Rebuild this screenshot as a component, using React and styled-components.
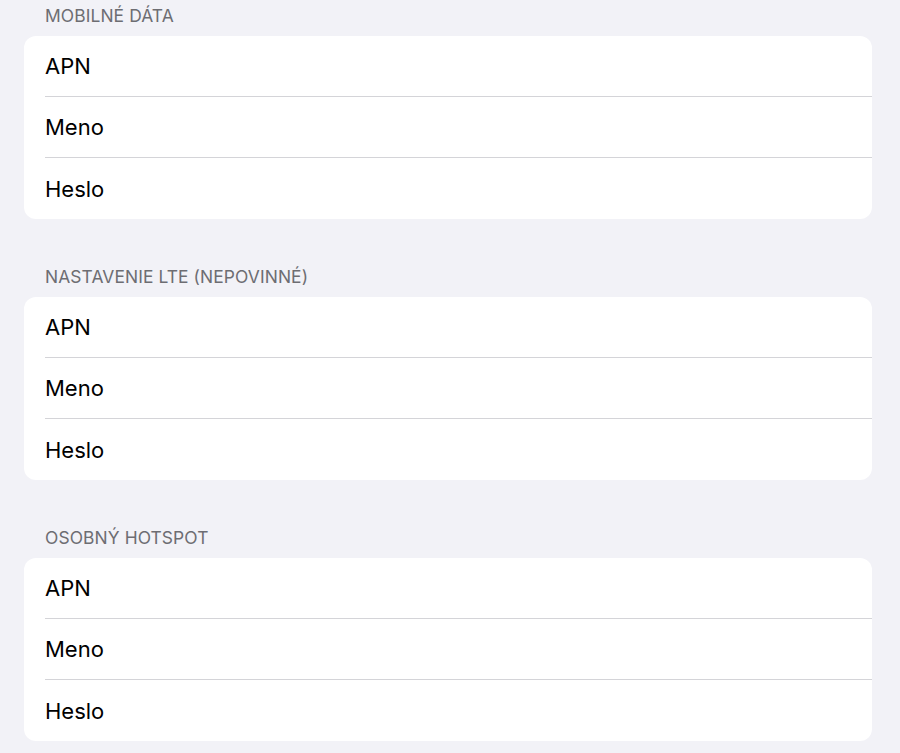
import React from "react";
import styled, { createGlobalStyle } from "styled-components";

const Global = createGlobalStyle`
  html, body { margin: 0; padding: 0; background: #f2f2f7; }
  body { font-family: Inter, "Noto Sans", sans-serif; -webkit-font-smoothing: antialiased; }
`;

const Page = styled.div`
  display: flex;
  flex-direction: column;
  gap: 48px;
  padding: 6px 28px 12px 24px;
  min-height: 753px;
  box-sizing: border-box;
  background: #f2f2f7;
`;

const Section = styled.section`
  display: flex;
  flex-direction: column;
  gap: 10px;
`;

const Header = styled.div`
  padding-left: 21px;
  font-size: 17.4px;
  line-height: 20px;
  color: #6d6d72;
  letter-spacing: 0.1px;
`;

const Card = styled.div`
  background: #ffffff;
  border-radius: 12px;
  overflow: hidden;
`;

const Row = styled.div`
  height: 61px;
  padding-left: 21px;
  box-sizing: border-box;
  display: flex;
`;

const RowInner = styled.div`
  flex: 1;
  display: flex;
  align-items: center;
  font-size: 22px;
  color: #000;
  box-sizing: border-box;
  border-bottom: ${(p) => (p.$last ? "none" : "1px solid #d4d4d8")};
`;

const sections = [
  "MOBILNÉ DÁTA",
  "NASTAVENIE LTE (NEPOVINNÉ)",
  "OSOBNÝ HOTSPOT",
];
const rows = ["APN", "Meno", "Heslo"];

export default function App() {
  return (
    <>
      <Global />
      <Page>
        {sections.map((s) => (
          <Section key={s}>
            <Header>{s}</Header>
            <Card>
              {rows.map((r, i) => (
                <Row key={r}>
                  <RowInner $last={i === rows.length - 1}>{r}</RowInner>
                </Row>
              ))}
            </Card>
          </Section>
        ))}
      </Page>
    </>
  );
}
